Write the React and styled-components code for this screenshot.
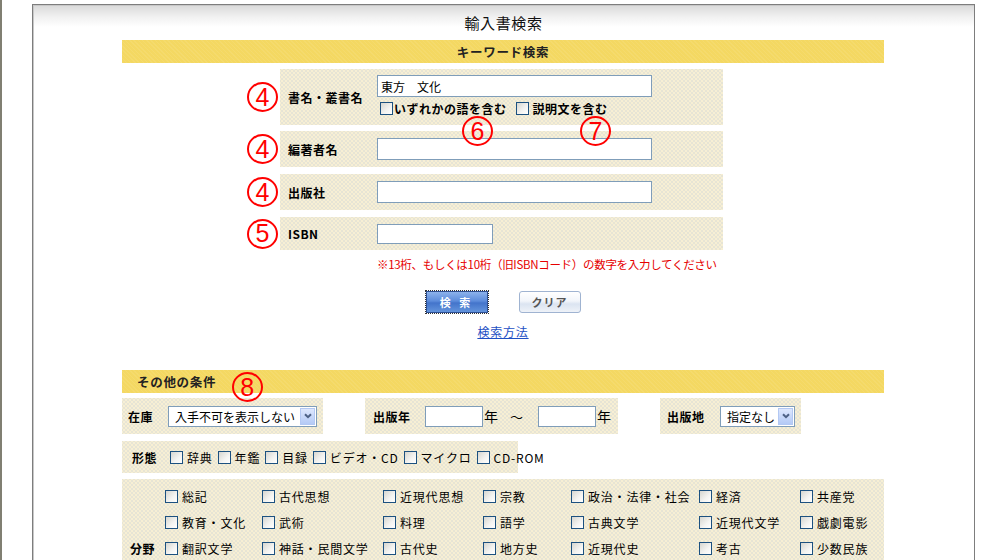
import styled, { createGlobalStyle } from "styled-components";

const GlobalStyle = createGlobalStyle`
  body {
    margin: 0;
    background: #ffffff;
    font-family: "Noto Sans CJK JP", "Noto Sans", sans-serif;
    font-size: 12px;
    color: #000;
  }
`;

const JP = `"Noto Sans CJK JP", "Noto Sans", sans-serif`;

const bunya = [
  ["総記", "古代思想", "近現代思想", "宗教", "政治・法律・社会", "経済", "共産党"],
  ["教育・文化", "武術", "料理", "語学", "古典文学", "近現代文学", "戯劇電影"],
  ["翻訳文学", "神話・民間文学", "古代史", "地方史", "近現代史", "考古", "少数民族"],
];

const keitai = ["辞典", "年鑑", "目録", "ビデオ・CD", "マイクロ", "CD-ROM"];

export default function App() {
  return (
    <>
      <GlobalStyle />
      <Page>
        <LeftRule />
        <Frame>
          <Title>輸入書検索</Title>
          <Section>
            <Bar $center>キーワード検索</Bar>

            <KeywordForm>
              <FieldRow $mt={6}>
                <Mark>4</Mark>
                <Panel $h={56}>
                  <Label>書名・叢書名</Label>
                  <FieldStack>
                    <TextInput $w={275} defaultValue="東方　文化" />
                    <Options>
                      <Check $bold $gap={1}>
                        <Box />
                        いずれかの語を含む
                      </Check>
                      <Check $bold $gap={4}>
                        <Box />
                        説明文を含む
                      </Check>
                    </Options>
                  </FieldStack>
                </Panel>
              </FieldRow>
              <FieldRow $mt={6}>
                <Mark>4</Mark>
                <Panel $h={36}>
                  <Label>編著者名</Label>
                  <TextInput $w={275} />
                </Panel>
              </FieldRow>
              <FieldRow $mt={7}>
                <Mark>4</Mark>
                <Panel $h={36}>
                  <Label>出版社</Label>
                  <TextInput $w={275} />
                </Panel>
              </FieldRow>
              <FieldRow $mt={7}>
                <Mark>5</Mark>
                <Panel $h={33}>
                  <Label>ISBN</Label>
                  <TextInput $w={116} $h={20} />
                </Panel>
              </FieldRow>

              <Callout $left={340} $top={53}>6</Callout>
              <Callout $left={458} $top={53}>7</Callout>
            </KeywordForm>

            <Note>※13桁、もしくは10桁（旧ISBNコード）の数字を入力してください</Note>

            <Buttons>
              <Button $primary>検 索</Button>
              <Button>クリア</Button>
            </Buttons>
            <HelpLink href="#">検索方法</HelpLink>

            <Bar $mt={30}>
              その他の条件
              <BarMark>8</BarMark>
            </Bar>

            <CondRow>
              <CondPanel $w={201} $pl={6}>
                <CondLabel $w={40}>在庫</CondLabel>
                <SelectBox $w={149}>
                  <SelectText>入手不可を表示しない</SelectText>
                  <SelectArrow>
                    <Chevron />
                  </SelectArrow>
                </SelectBox>
              </CondPanel>
              <CondPanel $w={253} $pl={8}>
                <CondLabel $w={52}>出版年</CondLabel>
                <TextInput $w={58} $h={21} />
                <Unit>年</Unit>
                <Tilde>～</Tilde>
                <TextInput $w={58} $h={21} />
                <Unit>年</Unit>
              </CondPanel>
              <CondPanel $w={141} $pl={7}>
                <CondLabel $w={53}>出版地</CondLabel>
                <SelectBox $w={75}>
                  <SelectText>指定なし</SelectText>
                  <SelectArrow>
                    <Chevron />
                  </SelectArrow>
                </SelectBox>
              </CondPanel>
            </CondRow>

            <FormPanel>
              <CondLabel $w={33}>形態</CondLabel>
              {keitai.map((k) => (
                <Check key={k} $gap={4}>
                  <Box />
                  {k}
                </Check>
              ))}
            </FormPanel>

            <FieldGrid>
              {bunya.map((row, r) => [
                r === 2 ? (
                  <GridLabel key={"l" + r}>分野</GridLabel>
                ) : (
                  <span key={"l" + r} />
                ),
                ...row.map((item) => (
                  <Check key={item} $gap={4}>
                    <Box />
                    {item}
                  </Check>
                )),
              ])}
            </FieldGrid>
          </Section>
        </Frame>
      </Page>
    </>
  );
}

function Chevron() {
  return (
    <svg width="8" height="6" viewBox="0 0 8 6">
      <path d="M1 1.2 L4 4.2 L7 1.2" fill="none" stroke="#4d6185" strokeWidth="2" />
    </svg>
  );
}

const Page = styled.div`
  display: flex;
  min-height: 560px;
  padding-top: 4px;
`;

const LeftRule = styled.div`
  width: 2px;
  margin-top: -4px;
  background: #807f72;
  flex: none;
`;

const Frame = styled.div`
  margin-left: 30px;
  width: 943px;
  box-sizing: border-box;
  border: 1px solid #7d7d7d;
  border-bottom: none;
  box-shadow: inset 1px 1px 0 #c8c8c8;
  background: linear-gradient(#d9d9d9 0px, #f1f1f1 12px, #ffffff 22px);
  padding-bottom: 40px;
`;

const Title = styled.div`
  height: 35px;
  display: flex;
  align-items: center;
  justify-content: center;
  font-size: 15px;
  letter-spacing: 0.6px;
  color: #111;
`;

const Section = styled.div`
  width: 762px;
  margin-left: 89px;
  display: flex;
  flex-direction: column;
`;

const Bar = styled.div`
  position: relative;
  height: 23px;
  margin-top: ${(p) => p.$mt || 0}px;
  display: flex;
  align-items: center;
  justify-content: ${(p) => (p.$center ? "center" : "flex-start")};
  padding-left: ${(p) => (p.$center ? 0 : 15)}px;
  background-color: #f4d862;
  background-image: repeating-linear-gradient(
    45deg,
    rgba(255, 255, 255, 0.07) 0 1px,
    transparent 1px 3px
  );
  font-size: 12.5px;
  font-weight: 700;
  letter-spacing: 0.7px;
  color: #222;
`;

const KeywordForm = styled.div`
  position: relative;
`;

const FieldRow = styled.div`
  display: flex;
  align-items: center;
  padding-left: 123px;
  margin-top: ${(p) => p.$mt}px;
`;

const Mark = styled.span`
  width: 31px;
  height: 30px;
  margin: 0 2px 0 2px;
  box-sizing: border-box;
  border: 2px solid #ff0000;
  border-radius: 50%;
  display: flex;
  align-items: center;
  justify-content: center;
  color: #ff0000;
  font-family: "Liberation Sans", sans-serif;
  font-size: 25px;
  line-height: 1;
  flex: none;
`;

const Callout = styled(Mark)`
  position: absolute;
  left: ${(p) => p.$left}px;
  top: ${(p) => p.$top}px;
  margin: 0;
`;

const BarMark = styled(Mark)`
  position: absolute;
  left: 110px;
  top: 2px;
  margin: 0;
  font-weight: 400;
`;

const dotted = `
  background-color: #f7efd4;
  background-image:
    radial-gradient(circle, rgba(195, 203, 215, 0.4) 0.6px, transparent 1px),
    radial-gradient(circle, rgba(195, 203, 215, 0.4) 0.6px, transparent 1px);
  background-size: 4px 4px;
  background-position: 0 0, 2px 2px;
`;

const Panel = styled.div`
  ${dotted}
  width: 443px;
  height: ${(p) => p.$h}px;
  box-sizing: border-box;
  padding-left: 8px;
  display: flex;
  align-items: center;
`;

const Label = styled.span`
  width: 89px;
  flex: none;
  font-size: 12px;
  font-weight: 700;
  letter-spacing: 0.5px;
`;

const FieldStack = styled.div`
  display: flex;
  flex-direction: column;
  gap: 4px;
  padding-bottom: 3px;
`;

const Options = styled.div`
  display: flex;
  gap: 9px;
  padding-left: 3px;
`;

const TextInput = styled.input`
  width: ${(p) => p.$w}px;
  height: ${(p) => p.$h || 22}px;
  box-sizing: border-box;
  margin: 0;
  padding: 0 3px;
  border: 1px solid #7f9db9;
  background: #fff;
  font-family: ${JP};
  font-size: 12px;
  outline: none;
  flex: none;
`;

const Check = styled.label`
  display: inline-flex;
  align-items: center;
  gap: ${(p) => p.$gap}px;
  font-size: 12px;
  line-height: 15px;
  font-weight: ${(p) => (p.$bold ? 700 : 400)};
  letter-spacing: ${(p) => (p.$bold ? 0.5 : 0.8)}px;
  white-space: nowrap;
`;

const Box = styled.span`
  width: 13px;
  height: 13px;
  box-sizing: border-box;
  border: 1px solid #1c5180;
  background: linear-gradient(135deg, #d6d6d0 0%, #f4f4f2 60%, #ffffff 100%);
  flex: none;
`;

const Note = styled.div`
  margin-top: 6px;
  padding-left: 255px;
  height: 16px;
  color: #e60000;
  font-size: 11.5px;
  letter-spacing: -0.3px;
  white-space: nowrap;
`;

const Buttons = styled.div`
  display: flex;
  justify-content: center;
  gap: 31px;
  margin-top: 19px;
`;

const Button = styled.button`
  width: 62px;
  height: 22px;
  margin: 0;
  padding: 0;
  box-sizing: border-box;
  font-family: ${JP};
  font-size: 11px;
  font-weight: 700;
  letter-spacing: ${(p) => (p.$primary ? 3 : 1)}px;
  border-radius: ${(p) => (p.$primary ? 0 : 3)}px;
  color: ${(p) => (p.$primary ? "#ffffff" : "#555555")};
  border: 1px solid ${(p) => (p.$primary ? "#2d4f93" : "#9fb3d1")};
  outline: ${(p) => (p.$primary ? "1px dotted #333" : "none")};
  background: ${(p) =>
    p.$primary
      ? "linear-gradient(#8cb2ec 0%, #5d8cdb 45%, #4374cb 55%, #6394dc 100%)"
      : "linear-gradient(#ffffff 0%, #f2f5fa 45%, #dbe4f1 60%, #eef2f8 100%)"};
`;

const HelpLink = styled.a`
  align-self: center;
  margin-top: 10px;
  font-size: 12px;
  letter-spacing: 0.8px;
  color: #1d4fc4;
  text-decoration: underline;
`;

const CondRow = styled.div`
  display: flex;
  gap: 42px;
  margin-top: 5px;
`;

const CondPanel = styled.div`
  ${dotted}
  width: ${(p) => p.$w}px;
  height: 36px;
  box-sizing: border-box;
  padding-left: ${(p) => p.$pl}px;
  display: flex;
  align-items: center;
`;

const CondLabel = styled.span`
  width: ${(p) => p.$w}px;
  flex: none;
  font-size: 12px;
  font-weight: 700;
  letter-spacing: 0.5px;
`;

const SelectBox = styled.div`
  width: ${(p) => p.$w}px;
  height: 21px;
  box-sizing: border-box;
  border: 1px solid #7f9db9;
  background: #fff;
  padding: 1px;
  display: flex;
  align-items: center;
`;

const SelectText = styled.span`
  flex: 1;
  padding-left: 5px;
  font-size: 12px;
  white-space: nowrap;
  overflow: hidden;
`;

const SelectArrow = styled.span`
  width: 15px;
  height: 17px;
  box-sizing: border-box;
  border: 1px solid #b3c8f3;
  background: linear-gradient(#dde7fd, #b4caf6);
  display: flex;
  align-items: center;
  justify-content: center;
  flex: none;
`;

const Unit = styled.span`
  margin-left: 1px;
  font-size: 14px;
`;

const Tilde = styled.span`
  margin: 0 15px 0 12px;
  font-size: 13px;
`;

const FormPanel = styled.div`
  ${dotted}
  width: 396px;
  height: 32px;
  margin-top: 7px;
  box-sizing: border-box;
  padding-left: 10px;
  display: flex;
  align-items: center;
  gap: 5px;
`;

const FieldGrid = styled.div`
  ${dotted}
  margin-top: 6px;
  padding: 4px 0 30px 8px;
  display: grid;
  grid-template-columns: 35px 97px 121px 100px 88px 128px 101px 1fr;
  grid-auto-rows: 26px;
  align-items: center;
`;

const GridLabel = styled.span`
  font-size: 12px;
  font-weight: 700;
  letter-spacing: 0.5px;
`;
